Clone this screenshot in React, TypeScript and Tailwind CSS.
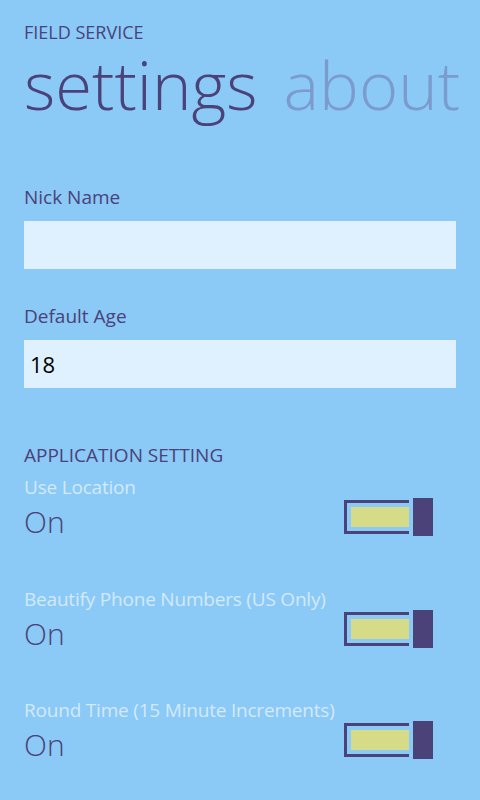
import { useState } from "react";

type toggleRow = {
  label: string;
};

const font = { fontFamily: '"Open Sans", "Noto Sans", sans-serif' };

const Toggle = ({ on }: { on: boolean }) => {
  return (
    <div className="flex items-center gap-[4px]">
      <div className="w-[65px] h-[34px] border-[3px] border-r-0 border-[#4a4278] pl-[4px] py-[4px]">
        <div className={on ? "w-[58px] h-[20px] bg-[#d6db88]" : "w-[58px] h-[20px]"} />
      </div>
      <div className="w-[20px] h-[38px] bg-[#4a4278]" />
    </div>
  );
};

const SettingRow = ({ label }: toggleRow) => {
  const [on, setOn] = useState(true);
  return (
    <div className="flex items-end justify-between pr-[23px]" onClick={() => setOn(!on)}>
      <div>
        <div className="text-[19px] leading-[24px] tracking-[-0.2px] text-[#d3eafb]">{label}</div>
        <div className="mt-[5px] text-[30px] leading-[36px] font-light text-[#4a4278]">
          {on ? "On" : "Off"}
        </div>
      </div>
      <div className="mb-[4px]">
        <Toggle on={on} />
      </div>
    </div>
  );
};

export default function App() {
  return (
    <div className="w-[480px] h-[800px] bg-[#8bc9f6] overflow-hidden" style={font}>
      <div className="px-[24px] pt-[20px]">
        <div className="text-[18px] leading-[24px] text-[#4a4278]">FIELD SERVICE</div>
        <div className="mt-[2px] flex gap-[26px] whitespace-nowrap text-[67px] leading-[76px] font-light">
          <span className="text-[#4a4278]">settings</span>
          <span className="text-[#7b9bcd]">about</span>
        </div>

        <div className="mt-[63px]">
          <div className="text-[19px] leading-[24px] text-[#4a4278]">Nick Name</div>
          <div className="mt-[12px] h-[48px] bg-[#dff1fe]" />
        </div>

        <div className="mt-[35px]">
          <div className="text-[19px] leading-[24px] text-[#4a4278]">Default Age</div>
          <div className="mt-[12px] h-[48px] bg-[#dff1fe] px-[6px] text-[22px] leading-[48px] text-black">
            18
          </div>
        </div>

        <div className="mt-[55px] text-[19px] leading-[24px] text-[#4a4278]">APPLICATION SETTING</div>

        <div className="mt-[8px]">
          <SettingRow label="Use Location" />
        </div>
        <div className="mt-[47px]">
          <SettingRow label="Beautify Phone Numbers (US Only)" />
        </div>
        <div className="mt-[46px]">
          <SettingRow label="Round Time (15 Minute Increments)" />
        </div>
      </div>
    </div>
  );
}
